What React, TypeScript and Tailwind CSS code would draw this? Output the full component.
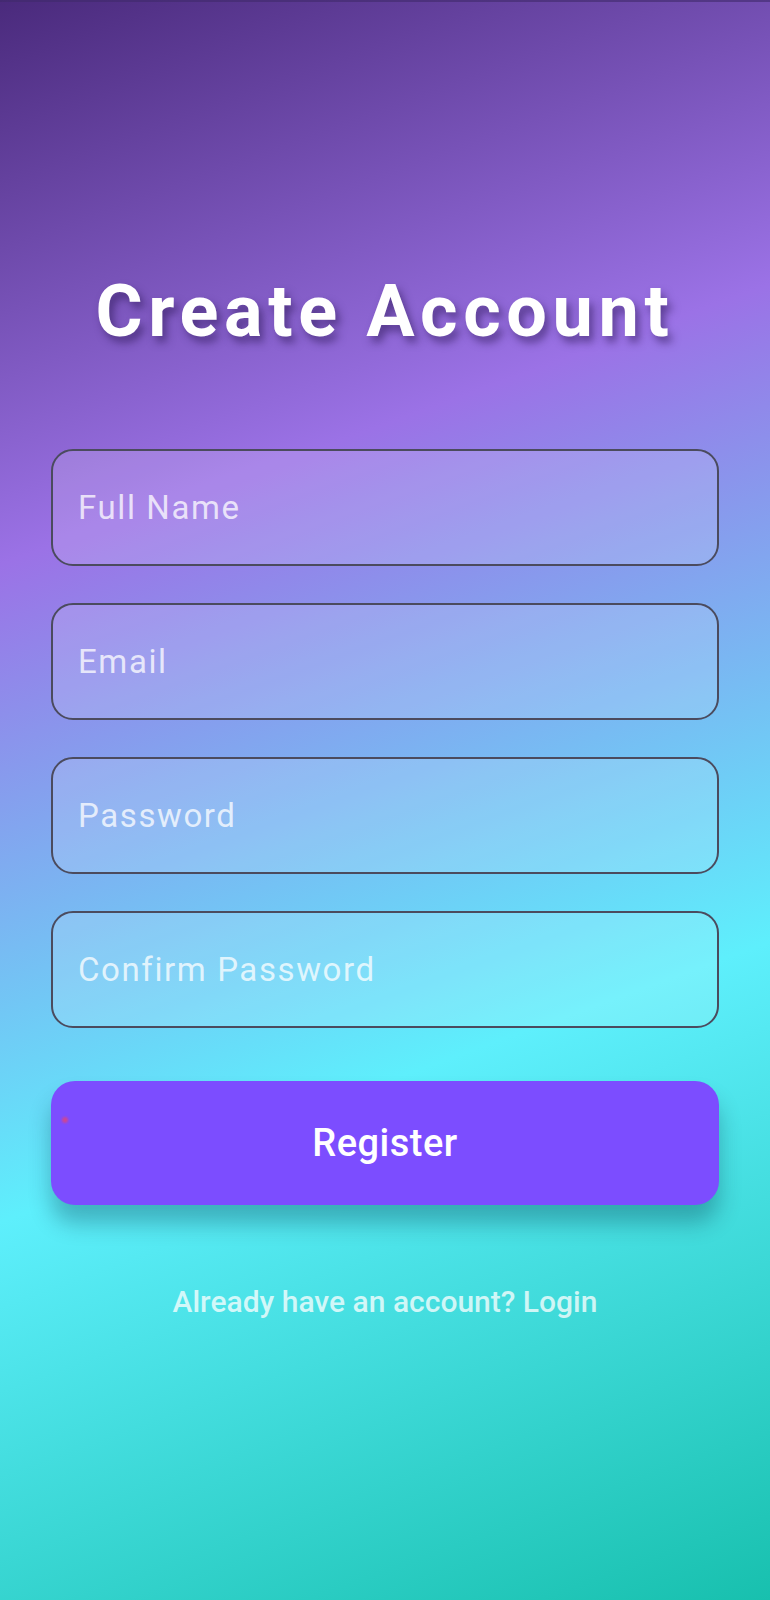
export default function App() {
  const fields = ["Full Name", "Email", "Password", "Confirm Password"];

  return (
    <div className="min-h-[1600px] w-full bg-[linear-gradient(160deg,#4a2a7c_0%,#9b72e6_30%,#5eeffc_65%,#18c0ae_100%)] font-['Roboto',sans-serif]">
      <div className="h-[2px] w-full bg-[#3f2a6a]/60"></div>
      <div className="flex flex-col px-[51px] pt-[274px]">
        <h1 className="text-center text-[72px] font-bold leading-none tracking-[5.6px] text-white [text-shadow:4px_6px_8px_rgba(40,20,80,0.55)]">
          Create Account
        </h1>

        <form className="mt-[101px] flex flex-col gap-[37px]">
          {fields.map((f) => (
            <input
              key={f}
              type={f.includes("Password") ? "password" : "text"}
              placeholder={f}
              className="h-[117px] w-full rounded-[22px] border-2 border-[#4b4b5e] bg-white/15 pl-[25px] text-[33px] tracking-[1.6px] text-white outline-none placeholder:text-white/75"
            />
          ))}
        </form>

        {/* Register */}
        <button className="relative mt-[53px] h-[124px] w-full rounded-[24px] bg-[#7c4dff] text-[38px] font-medium tracking-[0.5px] text-white shadow-[0_18px_22px_rgba(0,40,60,0.3)]">
          <span className="absolute left-[11px] top-[36px] h-[6px] w-[6px] rounded-full bg-[#e0457a]/80 blur-[1px]"></span>
          Register
        </button>

        <p className="mt-[74px] text-center text-[30px] font-medium text-white/75">
          Already have an account? Login
        </p>
      </div>
    </div>
  );
}
